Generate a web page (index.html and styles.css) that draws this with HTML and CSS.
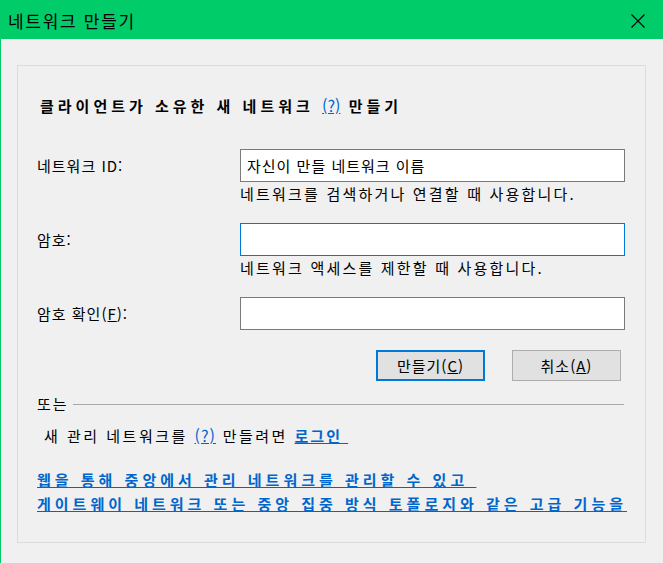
FILE: index.html
```html
<!DOCTYPE html>
<html lang="ko">
<head>
<meta charset="UTF-8">
<title>네트워크 만들기</title>
<link rel="stylesheet" href="styles.css">
</head>
<body>

<div class="window">
  <div class="titlebar">
    <span class="title">네트워크 만들기</span>
    <svg class="close" width="14" height="14" viewBox="0 0 14 14">
      <path d="M0.5 0.5 L13.5 13.5 M13.5 0.5 L0.5 13.5" stroke="#000" stroke-width="1.1" fill="none"/>
    </svg>
  </div>

  <div class="content">
    <div class="panel">
      <h1 class="heading">클라이언트가 소유한 새 네트워크 <a class="help">(?)</a> 만들기</h1>

      <div class="field first">
        <label for="netId">네트워크 ID:</label>
        <div class="control">
          <input type="text" id="netId" value="자신이 만들 네트워크 이름">
          <p class="hint">네트워크를 검색하거나 연결할 때 사용합니다.</p>
        </div>
      </div>

      <div class="field">
        <label for="pass">암호:</label>
        <div class="control">
          <input type="password" id="pass" class="focused">
          <p class="hint">네트워크 액세스를 제한할 때 사용합니다.</p>
        </div>
      </div>

      <div class="field">
        <label for="pass2">암호 확인(<u>F</u>):</label>
        <div class="control">
          <input type="password" id="pass2">
        </div>
      </div>

      <div class="buttons">
        <button type="button" class="default">만들기(<u>C</u>)</button>
        <button type="button">취소(<u>A</u>)</button>
      </div>

      <div class="divider">
        <span>또는</span>
        <div class="rule"></div>
      </div>

      <p class="managed">새 관리 네트워크를 <a class="help">(?)</a> 만들려면 <a class="login">로그인&nbsp;</a></p>

      <p class="features">
        <a>웹을 통해 중앙에서 관리 네트워크를 관리할 수 있고&nbsp;</a><br>
        <a>게이트웨이 네트워크 또는 중앙 집중 방식 토폴로지와 같은 고급 기능을</a>
      </p>
    </div>
  </div>
</div>

</body>
</html>
```

FILE: styles.css
```css
body {
    margin: 0;
    font-family: "Noto Sans CJK KR", "Noto Sans", sans-serif;
    background: #f0f0f0;
    color: #000;
}

.window {
    width: 663px;
    height: 563px;
    overflow: hidden;
}

.titlebar {
    height: 39px;
    background-color: #00cc6a;
    display: flex;
    align-items: center;
    justify-content: space-between;
    padding: 0 18px 0 8px;
}

.title {
    font-size: 17px;
    letter-spacing: 1.7px;
    line-height: 20px;
    margin-top: 3px;
}

.close {
    display: block;
    margin-top: 2px;
}

.content {
    border-left: 1px solid #00cc6a;
    height: 524px;
    padding-top: 26px;
    box-sizing: border-box;
}

.panel {
    margin: 0 17px 0 16px;
    height: 478px;
    box-sizing: border-box;
    border: 1px solid #dcdcdc;
    padding: 29px 20px 0 19px;
}

.heading {
    margin: 0;
    font-size: 15px;
    font-weight: bold;
    line-height: 20px;
    letter-spacing: 4px;
    padding-left: 3px;
}

a {
    color: #0066cc;
    text-decoration: underline;
}

.heading .help {
    font-weight: normal;
    font-size: 16px;
    letter-spacing: 0;
}

.field {
    display: grid;
    grid-template-columns: 203px 385px;
    margin-top: 19px;
}

.field.first {
    margin-top: 33px;
}

.field label {
    font-size: 15px;
    line-height: 33px;
    height: 33px;
    letter-spacing: 1px;
}

.field input {
    display: block;
    width: 385px;
    height: 33px;
    box-sizing: border-box;
    border: 1px solid #7a7a7a;
    background: #fff;
    padding: 0 6px;
    font-family: inherit;
    font-size: 15px;
    letter-spacing: 1px;
    color: #000;
    outline: none;
}

.field input.focused {
    border-color: #0078d7;
}

.hint {
    margin: 2px 0 0;
    font-size: 15px;
    line-height: 20px;
    letter-spacing: 2.2px;
}

.buttons {
    display: flex;
    justify-content: flex-end;
    gap: 27px;
    margin-top: 20px;
    padding-right: 4px;
}

button {
    width: 109px;
    height: 31px;
    box-sizing: border-box;
    background: #e1e1e1;
    border: 1px solid #adadad;
    font-family: inherit;
    font-size: 15px;
    letter-spacing: 1px;
    padding: 0;
    color: #000;
}

button.default {
    border: 2px solid #0078d7;
}

.divider {
    display: flex;
    align-items: center;
    margin-top: 13px;
    height: 20px;
}

.divider span {
    font-size: 15px;
    line-height: 20px;
    letter-spacing: 2px;
    margin-right: 4px;
}

.rule {
    flex: 1;
    height: 1px;
    background: #a9a9a9;
    margin-right: 1px;
}

.managed {
    margin: 11px 0 0 7px;
    font-size: 15px;
    line-height: 20px;
    letter-spacing: 2.5px;
}

.managed .help {
    font-size: 16px;
    letter-spacing: 1px;
}

.managed .login {
    font-weight: bold;
    letter-spacing: 2px;
}

.features {
    margin: 22px 0 0;
    font-size: 15px;
    font-weight: bold;
    line-height: 24px;
    letter-spacing: 4px;
    white-space: nowrap;
}
```
